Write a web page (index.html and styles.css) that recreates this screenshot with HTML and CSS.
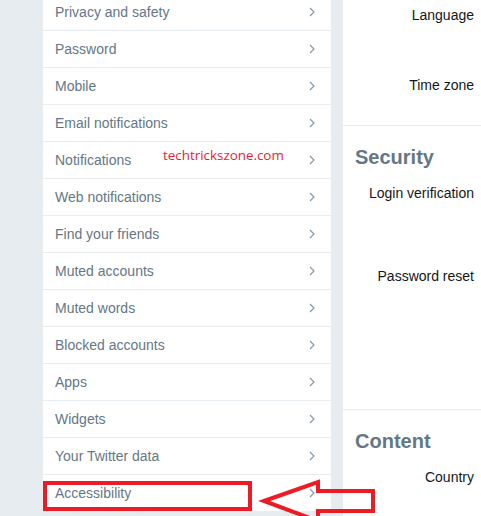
FILE: index.html
```html
<!DOCTYPE html>
<html>
<head>
<meta charset="utf-8">
<link rel="stylesheet" href="styles.css">
</head>
<body>
<div class="page">
  <nav class="menu">
    <ul class="menu-list">
      <li class="menu-item"><span>Privacy and safety</span><svg class="chev" viewBox="0 0 6 10"><path d="M1 1 L5 5 L1 9"/></svg></li>
      <li class="menu-item"><span>Password</span><svg class="chev" viewBox="0 0 6 10"><path d="M1 1 L5 5 L1 9"/></svg></li>
      <li class="menu-item"><span>Mobile</span><svg class="chev" viewBox="0 0 6 10"><path d="M1 1 L5 5 L1 9"/></svg></li>
      <li class="menu-item"><span>Email notifications</span><svg class="chev" viewBox="0 0 6 10"><path d="M1 1 L5 5 L1 9"/></svg></li>
      <li class="menu-item"><span>Notifications</span><svg class="chev" viewBox="0 0 6 10"><path d="M1 1 L5 5 L1 9"/></svg></li>
      <li class="menu-item"><span>Web notifications</span><svg class="chev" viewBox="0 0 6 10"><path d="M1 1 L5 5 L1 9"/></svg></li>
      <li class="menu-item"><span>Find your friends</span><svg class="chev" viewBox="0 0 6 10"><path d="M1 1 L5 5 L1 9"/></svg></li>
      <li class="menu-item"><span>Muted accounts</span><svg class="chev" viewBox="0 0 6 10"><path d="M1 1 L5 5 L1 9"/></svg></li>
      <li class="menu-item"><span>Muted words</span><svg class="chev" viewBox="0 0 6 10"><path d="M1 1 L5 5 L1 9"/></svg></li>
      <li class="menu-item"><span>Blocked accounts</span><svg class="chev" viewBox="0 0 6 10"><path d="M1 1 L5 5 L1 9"/></svg></li>
      <li class="menu-item"><span>Apps</span><svg class="chev" viewBox="0 0 6 10"><path d="M1 1 L5 5 L1 9"/></svg></li>
      <li class="menu-item"><span>Widgets</span><svg class="chev" viewBox="0 0 6 10"><path d="M1 1 L5 5 L1 9"/></svg></li>
      <li class="menu-item"><span>Your Twitter data</span><svg class="chev" viewBox="0 0 6 10"><path d="M1 1 L5 5 L1 9"/></svg></li>
      <li class="menu-item"><span>Accessibility</span><svg class="chev" viewBox="0 0 6 10"><path d="M1 1 L5 5 L1 9"/></svg></li>
    </ul>
  </nav>
  <main class="content">
    <section class="sec sec-first">
      <div class="label">Language</div>
      <div class="label gap-tz">Time zone</div>
    </section>
    <section class="sec sec-security">
      <h2 class="sec-title">Security</h2>
      <div class="label gap-first">Login verification</div>
      <div class="label gap-pw">Password reset</div>
    </section>
    <section class="sec sec-content">
      <h2 class="sec-title">Content</h2>
      <div class="label gap-first">Country</div>
    </section>
  </main>
  <div class="watermark">techtrickszone.com</div>
  <div class="highlight-box"></div>
  <svg class="arrow" viewBox="0 0 481 516" width="481" height="516">
    <polygon points="264,501 318,482 318,491 373,491 373,511 318,511 318,521"/>
  </svg>
</div>
</body>
</html>
```

FILE: styles.css
```css
html, body {
  margin: 0;
  padding: 0;
  background: #e6ecf0;
  overflow: hidden;
}

body {
  font-family: "Liberation Sans", Arial, sans-serif;
  width: 481px;
  height: 516px;
}

.page {
  position: relative;
  display: flex;
  gap: 12px;
  padding-left: 43px;
  height: 516px;
  overflow: hidden;
}

.menu {
  width: 288px;
  flex: none;
  align-self: flex-start;
  background: #ffffff;
  margin-top: -6px;
  border-radius: 0 0 4px 4px;
}

.menu-list {
  list-style: none;
  margin: 0;
  padding: 0;
}

.menu-item {
  display: flex;
  align-items: center;
  justify-content: space-between;
  height: 36px;
  padding: 0 16px 0 12px;
  border-bottom: 1px solid #e6ecf0;
  font-size: 14px;
  color: #657786;
}

.menu-item:last-child {
  border-bottom: none;
}

.chev {
  width: 6px;
  height: 10px;
  fill: none;
  stroke: #8899a6;
  stroke-width: 1.2;
}

.content {
  flex: 1;
  background: #ffffff;
  min-width: 0;
}

.sec {
  border-bottom: 1px solid #e6ecf0;
  padding: 0 7px 0 12px;
}

.label {
  font-size: 14px;
  line-height: 20px;
  color: #14171a;
  text-align: right;
  white-space: nowrap;
}

.sec-first {
  padding-top: 5px;
  height: 120px;
}

.gap-tz { margin-top: 50px; }

.sec-title {
  margin: 0;
  font-size: 20px;
  line-height: 24px;
  font-weight: bold;
  color: #657786;
}

.sec-security {
  padding-top: 19px;
  height: 264px;
}

.sec-content {
  padding-top: 19px;
  border-bottom: none;
}

.gap-first { margin-top: 14px; }
.gap-pw { margin-top: 63px; }

.watermark {
  position: absolute;
  left: 163px;
  top: 145px;
  font-family: "Open Sans", "DejaVu Sans", sans-serif;
  font-size: 13.4px;
  line-height: 20px;
  color: #ec1a31;
}

.highlight-box {
  position: absolute;
  left: 43px;
  top: 481px;
  width: 209px;
  height: 30px;
  box-sizing: border-box;
  border: 4px solid #ed1c24;
}

.arrow {
  position: absolute;
  left: 0;
  top: 0;
  fill: none;
  stroke: #ed1c24;
  stroke-width: 4;
  stroke-linejoin: miter;
}
```
